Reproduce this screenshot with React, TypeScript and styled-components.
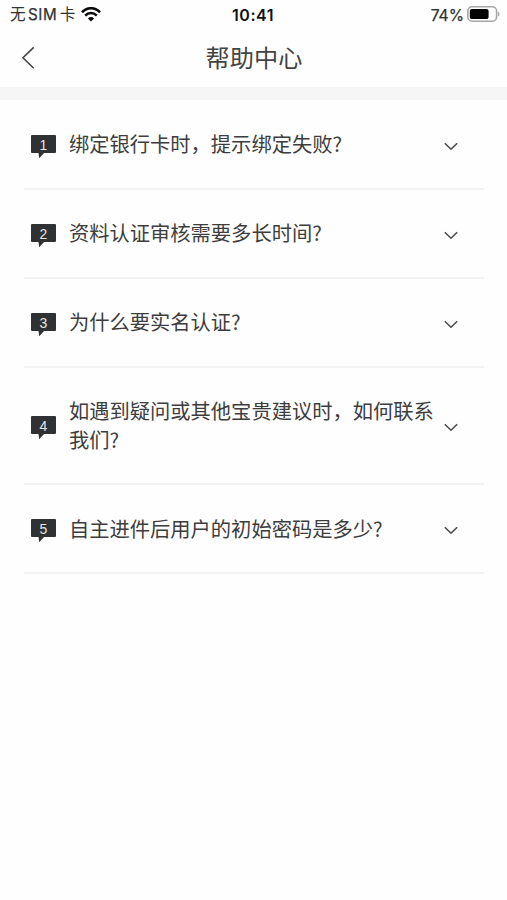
import React from "react";
import styled, { createGlobalStyle } from "styled-components";

const GlobalStyle = createGlobalStyle`
  * { box-sizing: border-box; }
  body {
    margin: 0;
    background: #fefefe;
    color: #3b3b3b;
    font-family: "Noto Sans CJK SC", sans-serif;
  }
`;

const Screen = styled.div`
  min-height: 900px;
  background: #fefefe;
`;

const StatusBar = styled.header`
  display: grid;
  grid-template-columns: 1fr auto 1fr;
  align-items: center;
  height: 28px;
  padding: 0 7px 0 10px;
  font-family: Inter, "Noto Sans CJK SC", sans-serif;
  font-size: 15.6px;
  line-height: 28px;
  color: #333;
`;

const Carrier = styled.div`
  display: flex;
  align-items: center;
  gap: 6px;
  height: 28px;
  white-space: pre;
`;

const CarrierName = styled.span`
  display: flex;
  gap: 2.5px;
  padding-top: 1px;
  font-weight: 400;
`;

const CarrierLatin = styled.span`
  font-size: 15.2px;
  letter-spacing: 0.5px;
  -webkit-text-stroke: 0.25px #333;
`;

const Clock = styled.time`
  height: 28px;
  margin: 1px 2px 0 -2px;
  font-weight: 600;
  font-size: 16px;
  letter-spacing: 0.5px;
  color: #111;
`;

const Power = styled.div`
  display: flex;
  justify-content: flex-end;
  align-items: center;
  gap: 3px;
  height: 28px;
`;

const Percent = styled.span`
  padding-top: 2px;
  -webkit-text-stroke: 0.25px #333;
`;

const NavBar = styled.nav`
  display: grid;
  grid-template-columns: 60px 1fr 60px;
  align-items: center;
  height: 59px;
  background: #fefefe;
`;

const BackButton = styled.button`
  display: flex;
  align-items: center;
  height: 59px;
  padding: 0 0 0 21px;
  border: 0;
  background: none;
`;

const Title = styled.h1`
  margin: 0;
  padding: 0 0 2px 1px;
  text-align: center;
  font-size: 24.2px;
  line-height: 57px;
  font-weight: 400;
  color: #444;
`;

const Divider = styled.div`
  height: 13px;
  background: #f6f6f6;
`;

const List = styled.ul`
  list-style: none;
  margin: 0;
  padding: 1px 23px 0 24px;
`;

const Item = styled.li`
  display: grid;
  grid-template-columns: 38px 366px 1fr;
  align-items: center;
  padding: 28.4px 0 30.2px 7px;
  border-bottom: 2px solid #f3f3f3;
`;

const Badge = styled.span`
  display: grid;
  width: 25px;
  height: 24px;
  margin: 3px 0 -3.6px;
  color: #e4e4e4;
  font-family: "Liberation Sans", sans-serif;
  font-size: 14px;
  line-height: 20px;
  text-align: center;
`;

const BadgeShape = styled.svg`
  grid-area: 1 / 1;
`;

const BadgeNumber = styled.span`
  grid-area: 1 / 1;
  z-index: 1;
`;

const Question = styled.span`
  font-size: 20.28px;
  line-height: 28.4px;
  color: #3d3d3d;
`;

const Chevron = styled.svg`
  justify-self: start;
  margin: 6px 0 0 9px;
`;

const questions = [
  "绑定银行卡时，提示绑定失败?",
  "资料认证审核需要多长时间?",
  "为什么要实名认证?",
  "如遇到疑问或其他宝贵建议时，如何联系我们?",
  "自主进件后用户的初始密码是多少?",
];

function WifiIcon() {
  return (
    <svg width="20" height="15" viewBox="0 0 20 15" fill="none" stroke="#0a0a0a">
      <path d="M1 5.3C6-.1 14-.1 19 5.3" strokeWidth="2.7" />
      <path d="M4.2 8.6c3.3-3.5 8.3-3.5 11.6 0" strokeWidth="2.5" />
      <path d="M10 14.4 6.9 11.4c1.8-1.8 4.4-1.8 6.2 0Z" fill="#0a0a0a" stroke="none" />
    </svg>
  );
}

function BatteryIcon() {
  return (
    <svg width="33" height="17" viewBox="0 0 33 17">
      <rect x="0.8" y="0.8" width="28.8" height="14.4" rx="4.3" fill="#fefefe" stroke="#a6a6a6" strokeWidth="1.6" />
      <rect x="2.8" y="2.9" width="18.8" height="10.2" rx="2.2" fill="#050505" />
      <path d="M31 5.7c2 .8 2 3.8 0 4.6Z" fill="#a6a6a6" />
    </svg>
  );
}

export default function App() {
  return (
    <Screen>
      <GlobalStyle />
      <StatusBar>
        <Carrier>
          <CarrierName>
            <span>无</span>
            <CarrierLatin>SIM</CarrierLatin>
            <span>卡</span>
          </CarrierName>
          <WifiIcon />
        </Carrier>
        <Clock>10:41</Clock>
        <Power>
          <Percent>74%</Percent>
          <BatteryIcon />
        </Power>
      </StatusBar>
      <NavBar>
        <BackButton aria-label="返回">
          <svg width="14" height="24" viewBox="0 0 14 24" fill="none" stroke="#444" strokeWidth="1.6">
            <path d="M12.7 1.4 2 11.8l10.7 10.4" />
          </svg>
        </BackButton>
        <Title>帮助中心</Title>
      </NavBar>
      <Divider />
      <List>
        {questions.map((text, index) => (
          <Item key={text}>
            <Badge>
              <BadgeShape width="25" height="24" viewBox="0 0 25 24" fill="#303133">
                <path d="M1 0h23q1 0 1 1v16q0 1-1 1H13L8.2 23.2 7.5 18H1q-1 0-1-1V1q0-1 1-1Z" />
              </BadgeShape>
              <BadgeNumber>{index + 1}</BadgeNumber>
            </Badge>
            <Question>{text}</Question>
            <Chevron width="14" height="9" viewBox="0 0 14 9" fill="none" stroke="#4c4c4c" strokeWidth="1.6">
              <path d="m.8 1.2 6.2 6 6.2-6" />
            </Chevron>
          </Item>
        ))}
      </List>
    </Screen>
  );
}
